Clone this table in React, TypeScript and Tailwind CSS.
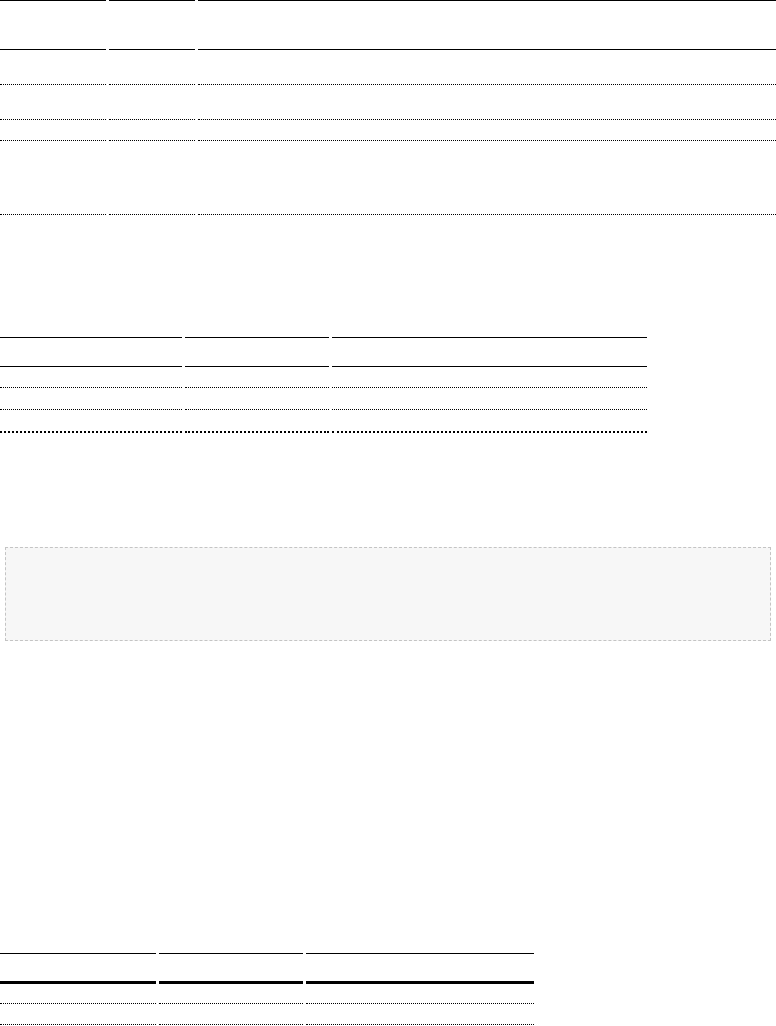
// Page of ruled tables whose cell text is not visible, plus a dashed note box
const cell = "border-b border-dotted border-black";

function Row({ cols, className }: { cols: string; className: string }) {
  return (
    <div className={`grid gap-x-[3px] ${cols}`}>
      <div className={className} />
      <div className={className} />
      <div className={className} />
    </div>
  );
}

export default function App() {
  return (
    <div className="w-[776px] bg-white font-['Liberation_Sans',sans-serif] text-[14px]">
      {/* first table */}
      <div className="flex flex-col">
        <Row cols="grid-cols-[106px_86px_1fr]" className="h-[50px] border-y border-solid border-black" />
        <Row cols="grid-cols-[106px_86px_1fr]" className={`h-[35px] ${cell}`} />
        <Row cols="grid-cols-[106px_86px_1fr]" className={`h-[35px] ${cell}`} />
        <Row cols="grid-cols-[106px_86px_1fr]" className={`h-[21px] ${cell}`} />
        <Row cols="grid-cols-[106px_86px_1fr]" className={`h-[74px] ${cell}`} />
      </div>

      {/* second table */}
      <div className="mt-[122px] flex w-[647px] flex-col">
        <Row cols="grid-cols-[182px_144px_1fr]" className="h-[30px] border-y border-solid border-black" />
        <Row cols="grid-cols-[182px_144px_1fr]" className={`h-[21px] ${cell}`} />
        <Row cols="grid-cols-[182px_144px_1fr]" className={`h-[22px] ${cell}`} />
        <Row cols="grid-cols-[182px_144px_1fr]" className="h-[23px] border-b-2 border-dotted border-black" />
      </div>

      {/* note box */}
      <div className="mx-[5px] mt-[114px] h-[94px] border border-dashed border-[#c4c4c4] bg-[#f7f7f7]" />

      {/* third table */}
      <div className="mt-[312px] flex w-[534px] flex-col">
        <Row cols="grid-cols-[156px_144px_1fr]" className="h-[31px] border-t border-b-[3px] border-solid border-black" />
        <Row cols="grid-cols-[156px_144px_1fr]" className={`h-[20px] ${cell}`} />
        <Row cols="grid-cols-[156px_144px_1fr]" className={`h-[21px] ${cell}`} />
      </div>
    </div>
  );
}
